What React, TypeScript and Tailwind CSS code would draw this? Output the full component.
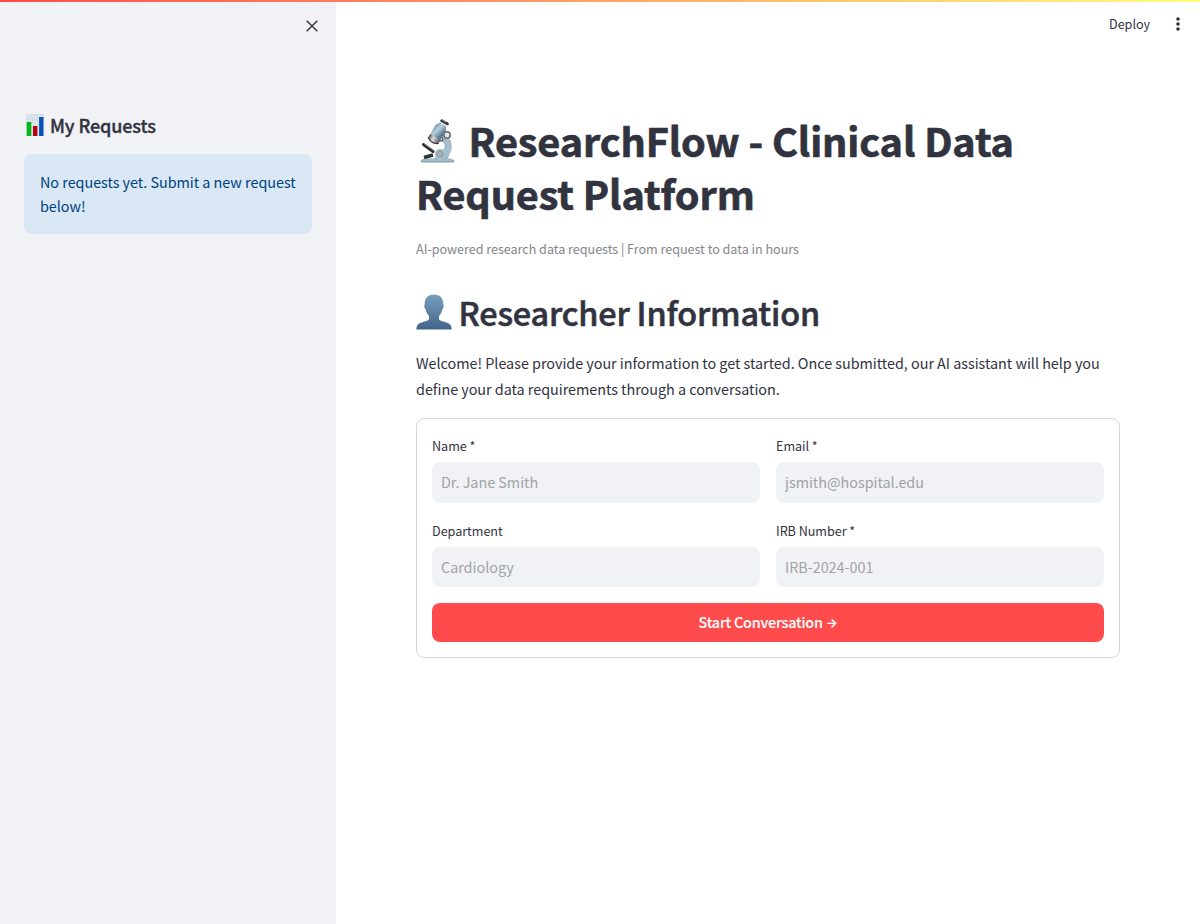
import React from "react";

const BarChartIcon = () => (
  <svg className="mt-[6px] ml-[2px] h-[22px] w-[18px] shrink-0" viewBox="0 0 18 22">
    <rect width="18" height="22" fill="#d9e5ea" />
    <path d="M0 .5H18M0 5H18M6 0V22M12 0V22" stroke="#cbd9df" strokeWidth=".5" />
    <rect x=".7" y="8" width="4.6" height="14" fill="#09b51a" />
    <rect x="7" y="12" width="4.4" height="10" fill="#b90010" />
    <rect x="13.1" y="3" width="4.4" height="19" fill="#0753bb" />
  </svg>
);

const MicroscopeIcon = () => (
  <svg className="mb-[-6px] ml-[4px] mr-[13.5px] inline-block h-[44px] w-[35px] align-baseline" viewBox="0 0 35 44">
    <defs>
      <linearGradient id="tube" x1="0" x2="1" y1="0" y2=".35">
        <stop stopColor="#638091" />
        <stop offset=".45" stopColor="#b9d2e0" />
        <stop offset="1" stopColor="#58788b" />
      </linearGradient>
      <linearGradient id="lens" x1="0" x2="1">
        <stop stopColor="#4b5055" />
        <stop offset=".4" stopColor="#ded9d9" />
        <stop offset="1" stopColor="#55565a" />
      </linearGradient>
    </defs>
    <path d="M24 20L29 20C32 24 32 31 29 35L27 40H15L18 34C24 32 28 27 23 23Z" fill="#a5c0cd" stroke="#8da8b5" strokeWidth=".7" />
    <path d="M1 41L4 39.5H30L34 41V43.5H1Z" fill="#88a6b5" />
    <path d="M2 41H33" stroke="#bcd4de" />
    <path d="M3.5 25.5L13 32.5" stroke="#292b2e" strokeWidth="3" strokeLinecap="round" />
    <path d="M4 24.5L13 31" stroke="#a5a8aa" strokeWidth=".8" />
    <path d="M4 38.5L13 36" stroke="#303437" strokeWidth="3.4" />
    <circle cx="20" cy="35" r="4.5" fill="#8fa3ae" stroke="#b0c4ce" strokeWidth="1.3" />
    <circle cx="20" cy="35" r="2" fill="#b3b1b6" />
    <circle cx="27" cy="16" r="3.2" fill="#e7e9e9" stroke="#62676a" strokeWidth="1.5" />
    <circle cx="21" cy="20" r="2" fill="#e8e8e8" stroke="#484e53" strokeWidth="1.2" />
    <g transform="translate(1.7 .8) rotate(31 15 14)">
      <path d="M12 2.5H19L21.5 7V18H9.5V7Z" fill="url(#tube)" />
      <path d="M9.5 17.5H21.5V22Q16 26 9.5 22Z" fill="url(#lens)" />
      <path d="M9.5 21.5Q16 25.5 21.5 21.5" fill="none" stroke="#34373b" />
    </g>
    <path d="M21.8 1.8L27.3 4.8" stroke="#34383b" strokeWidth="3" strokeLinecap="round" />
    <path d="M22.5 1.3L26 3" stroke="#9ba2a5" strokeWidth="1" />
  </svg>
);

const PersonIcon = () => (
  <svg className="mt-[4px] mr-[6.5px] h-[36px] w-[36px] shrink-0" viewBox="0 0 36 36">
    <defs>
      <linearGradient id="person" x1="0" x2="0" y1="0" y2="1">
        <stop stopColor="#789fbd" />
        <stop offset="1" stopColor="#426489" />
      </linearGradient>
    </defs>
    <path d="M18 .5C11.8.5 8.5 4.4 8.8 10C8 10 8.1 14.5 9.6 15.3C10.2 18.7 11.5 20.6 13 22V25.3C12 27.5 3.5 28 1.5 31Q.2 33 .3 35.5H35.7Q35.7 33 34.5 31C32.5 28 24 27.5 23 25.3V22C24.5 20.6 25.8 18.7 26.4 15.3C27.9 14.5 28 10 27.2 10C27.5 4.4 24.2.5 18 .5Z" fill="url(#person)" />
  </svg>
);

const Field = ({ label, placeholder, size }: { label: string; placeholder: string; size: string }) => (
  <label className="flex flex-col">
    <span className="mb-1 h-6 text-[12.6px] leading-[23px]">{label}</span>
    <input
      className={`${size} w-full rounded-lg bg-[#f0f2f6] px-[9px] text-[14.4px] tracking-[-0.03px] outline-none placeholder:text-[#a0a2a7]`}
      placeholder={placeholder}
    />
  </label>
);

export default function App() {
  return (
    <div className="flex h-[924px] flex-col overflow-hidden bg-white font-['Noto_Sans_CJK_SC',sans-serif] text-[14.4px] tracking-[-0.034px] text-[#31333f]">
      <div className="flex min-h-0 flex-1">
        <aside className="flex w-[336px] shrink-0 flex-col bg-[#f0f2f6] px-6">
          <button aria-label="Close sidebar" className="mt-[20px] mr-[-6px] flex h-3 w-3 self-end">
            <svg className="h-3 w-3" viewBox="0 0 12 12" fill="none" stroke="currentColor" strokeWidth="1.4">
              <path d="M.7.7L11.3 11.3M11.3.7L.7 11.3" />
            </svg>
          </button>
          <h2 className="mt-[76px] flex h-[46px] text-[18px] leading-[34px] font-medium tracking-[-0.12px] [-webkit-text-stroke:0.35px_#31333f]">
            <BarChartIcon />
            <span className="ml-[6px]">My Requests</span>
          </h2>
          <div className="h-20 rounded-lg bg-[#dae8f5] p-4 leading-6 whitespace-nowrap text-[#004280]">
            No requests yet. Submit a new request<br />below!
          </div>
        </aside>
        <main className="flex flex-1 flex-col">
          <header className="flex h-12 shrink-0 items-center justify-end pr-5">
            <button className="text-[12.6px] leading-6">Deploy</button>
            <svg className="ml-[26px] h-[14px] w-1" viewBox="0 0 4 14" fill="currentColor">
              <circle cx="2" cy="2" r="1.8" />
              <circle cx="2" cy="7" r="1.8" />
              <circle cx="2" cy="12" r="1.8" />
            </svg>
          </header>
          <div className="flex flex-col px-20 pt-[65px]">
            <h1 className="h-[106px] text-[39.6px] leading-[53px] font-bold tracking-[-0.09px] whitespace-nowrap [-webkit-text-stroke:0.7px_#31333f]">
              <MicroscopeIcon />ResearchFlow - Clinical Data<br />Request Platform
            </h1>
            <p className="mt-[19px] h-6 text-[12.6px] leading-[22px] tracking-[-0.025px] text-[#83858c]">
              AI-powered research data requests | From request to data in hours
            </p>
            <h2 className="mt-[28px] flex h-[50px] text-[32.4px] leading-[44px] font-medium tracking-[-0.16px] whitespace-nowrap [-webkit-text-stroke:0.6px_#31333f]">
              <PersonIcon />Researcher Information
            </h2>
            <p className="mt-[10px] h-[52px] leading-[26px] whitespace-nowrap">
              Welcome! Please provide your information to get started. Once submitted, our AI assistant will help you<br />
              define your data requirements through a conversation.
            </p>
            <form className="mt-4 flex flex-col gap-4 rounded-lg border border-[#d6d6d9] p-[15px]">
              <div className="grid grid-cols-2 gap-4">
                <Field label="Name *" placeholder="Dr. Jane Smith" size="h-[41px] pb-[2px]" />
                <Field label="Email *" placeholder="jsmith@hospital.edu" size="h-[41px] pb-[2px]" />
                <Field label="Department" placeholder="Cardiology" size="h-10 pb-[1px]" />
                <Field label="IRB Number *" placeholder="IRB-2024-001" size="h-10 pb-[1px]" />
              </div>
              <button type="button" className="flex h-[39px] justify-center rounded-lg bg-[#ff4b4b] leading-[38px] font-medium tracking-[-0.23px] text-white [-webkit-text-stroke:0.1px_white]">
                Start Conversation
                <span className="ml-[3px] font-['Inter',sans-serif] text-[12.5px] leading-[39px] font-semibold">→</span>
              </button>
            </form>
          </div>
        </main>
      </div>
      <div className="absolute inset-x-0 top-0 h-[2px] bg-[linear-gradient(90deg,#ff4b4b,#fffd80)]" />
    </div>
  );
}
